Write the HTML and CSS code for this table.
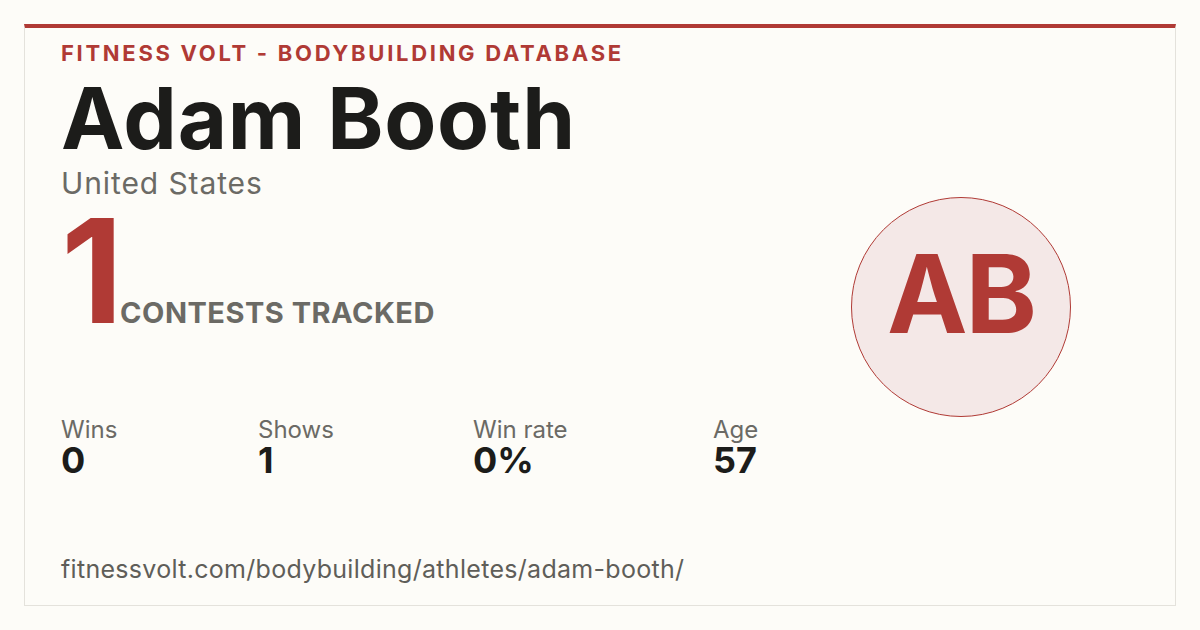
FILE: index.html
```html
<!DOCTYPE html>
<html lang="en">
<head>
<meta charset="utf-8">
<title>Adam Booth - Fitness Volt</title>
<link rel="stylesheet" href="styles.css">
</head>
<body>
<main class="card">
  <section class="info">
    <div class="brand">FITNESS VOLT - BODYBUILDING DATABASE</div>
    <h1 class="name">Adam Booth</h1>
    <div class="country">United States</div>
    <div class="contests">
      <span class="contests-num">1</span>
      <span class="contests-label">CONTESTS TRACKED</span>
    </div>
    <div class="stats">
      <div class="stat"><div class="stat-label">Wins</div><div class="stat-value">0</div></div>
      <div class="stat"><div class="stat-label">Shows</div><div class="stat-value">1</div></div>
      <div class="stat"><div class="stat-label">Win rate</div><div class="stat-value">0%</div></div>
      <div class="stat"><div class="stat-label">Age</div><div class="stat-value">57</div></div>
    </div>
    <div class="url">fitnessvolt.com/bodybuilding/athletes/adam-booth/</div>
  </section>
  <aside class="avatar">AB</aside>
</main>
</body>
</html>
```

FILE: styles.css
```css
html, body {
  margin: 0;
  padding: 0;
  background: #fdfcf8;
}
body {
  padding: 24px;
  font-family: "Inter", "Noto Sans", sans-serif;
}
.card {
  width: 1152px;
  height: 582px;
  box-sizing: border-box;
  border: 1px solid #e4e2dc;
  border-top: 4px solid #b03a35;
  background: #fdfcf8;
  display: grid;
  grid-template-columns: 1fr 220px;
  padding: 14px 104px 0 36px;
}
.info {
  display: flex;
  flex-direction: column;
}
.brand {
  font-size: 22px;
  line-height: 1;
  font-weight: 700;
  color: #b03a35;
  letter-spacing: 2.7px;
}
.name {
  margin: 12px 0 0;
  font-size: 85px;
  line-height: 1;
  font-weight: 700;
  color: #1c1c1a;
  letter-spacing: 0.8px;
}
.country {
  margin-top: 7px;
  font-size: 30px;
  line-height: 1;
  color: #6b6a65;
  letter-spacing: 0.9px;
}
.contests {
  margin-top: 1px;
  display: flex;
  align-items: baseline;
}
.contests-num {
  font-size: 144px;
  line-height: 1;
  font-weight: 700;
  color: #b03a35;
  margin-right: 9px;
  letter-spacing: -12px;
}
.contests-label {
  font-size: 29px;
  line-height: 1;
  font-weight: 700;
  color: #6b6a65;
  letter-spacing: 0.5px;
}
.stats {
  margin-top: 75px;
  display: grid;
  grid-template-columns: 197px 215px 240px auto;
}
.stat-label {
  font-size: 24px;
  line-height: 1;
  color: #6b6a65;
}
.stat-value {
  font-size: 36px;
  line-height: 1;
  font-weight: 700;
  color: #1c1c1a;
}
.url {
  margin-top: 79px;
  font-size: 25px;
  line-height: 1;
  color: #5f5e59;
  letter-spacing: 0.3px;
}
.avatar {
  align-self: start;
  margin-top: 155px;
  width: 220px;
  height: 220px;
  box-sizing: border-box;
  padding-bottom: 28px;
  border-radius: 50%;
  border: 1.5px solid #b03a35;
  background: #f4e8e7;
  color: #b03a35;
  font-size: 108px;
  font-weight: 700;
  display: flex;
  align-items: center;
  justify-content: center;
  letter-spacing: -2px;
}
```
